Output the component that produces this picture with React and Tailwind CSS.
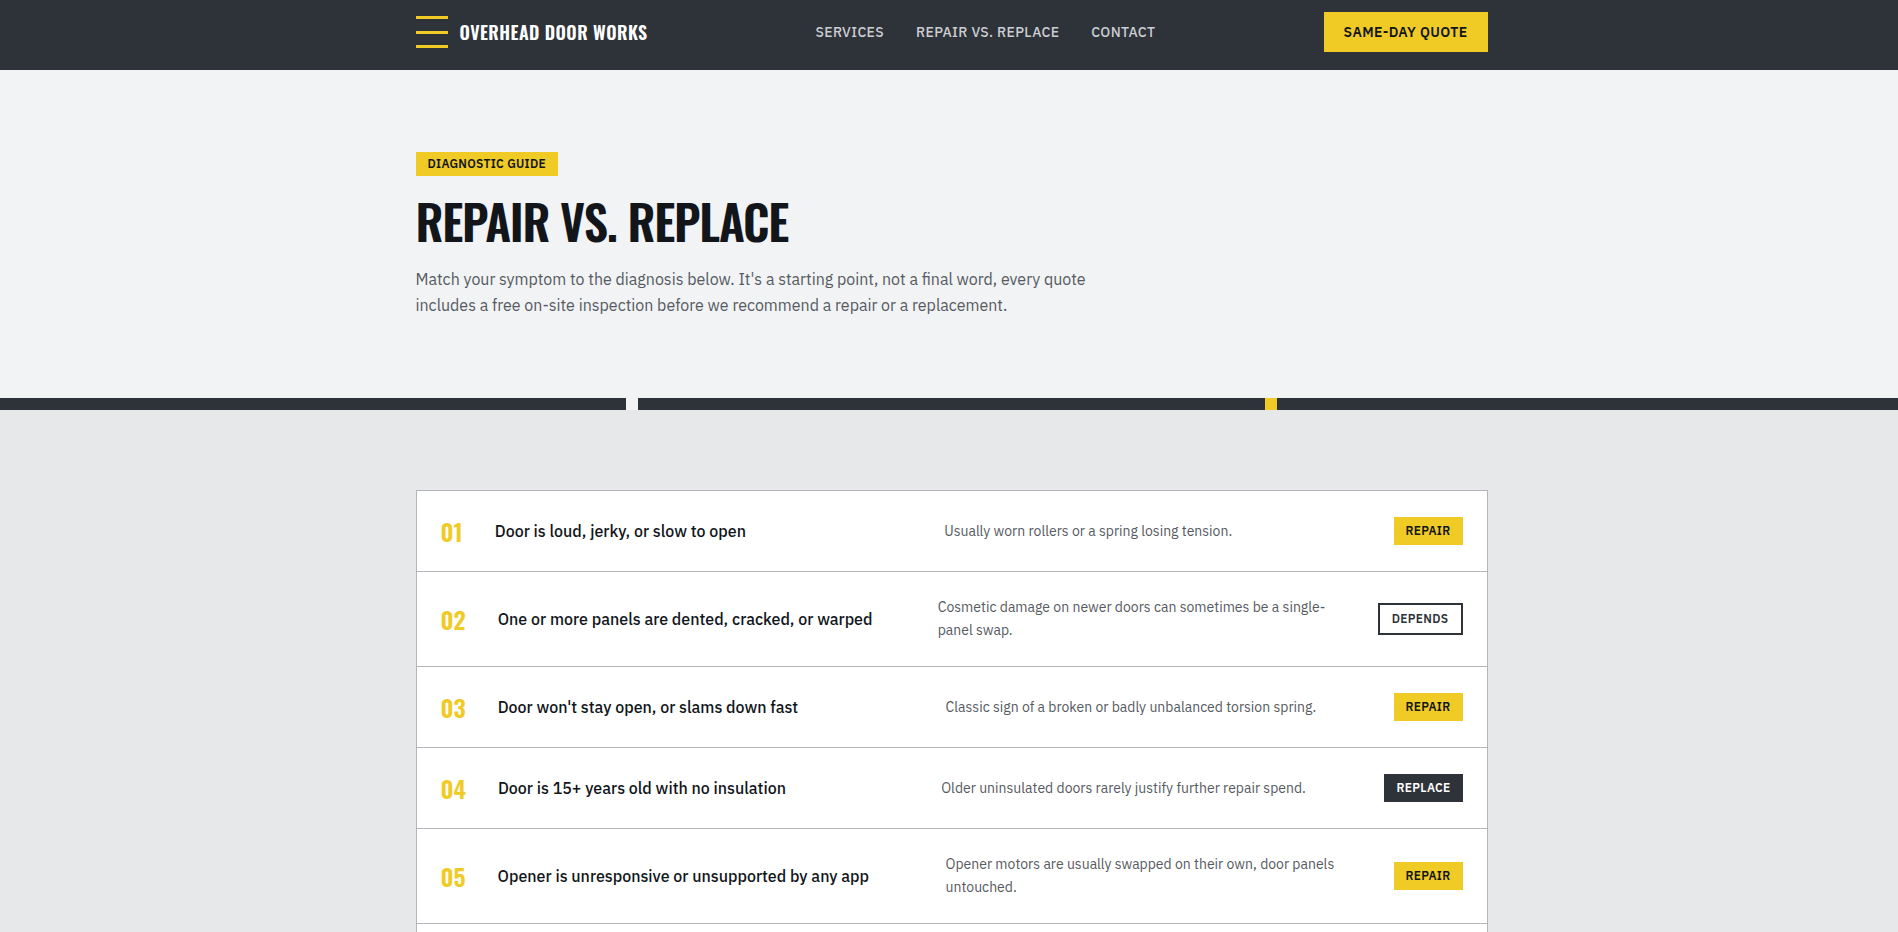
import React from 'react';

const navLinks = ['Services', 'Repair vs. Replace', 'Contact'];

const symptoms = [
  { symptom: 'Door is loud, jerky, or slow to open', diagnosis: 'Usually worn rollers or a spring losing tension.', verdict: 'Repair' },
  { symptom: 'One or more panels are dented, cracked, or warped', diagnosis: 'Cosmetic damage on newer doors can sometimes be a single-panel swap.', verdict: 'Depends' },
  { symptom: "Door won't stay open, or slams down fast", diagnosis: 'Classic sign of a broken or badly unbalanced torsion spring.', verdict: 'Repair' },
  { symptom: 'Door is 15+ years old with no insulation', diagnosis: 'Older uninsulated doors rarely justify further repair spend.', verdict: 'Replace' },
  { symptom: 'Opener is unresponsive or unsupported by any app', diagnosis: 'Opener motors are usually swapped on their own, door panels untouched.', verdict: 'Repair' },
];

const verdictStyles = {
  Repair: 'bg-[#f0cb26] text-[#12161b]',
  Depends: 'border-2 border-[#2e3239] bg-white text-[#2e3239]',
  Replace: 'bg-[#2e3239] text-white',
};

function Header() {
  return (
    <header className="bg-[#2e3239] pt-3 pb-[18px]">
      <div className="max-w-[1120px] mx-auto px-6 flex items-center justify-between">
        <a href="#" className="flex items-center gap-3 font-['Oswald',sans-serif] font-semibold text-lg tracking-wide uppercase text-white">
          <svg width="32" height="32" viewBox="0 0 32 32" fill="#f0cb26" aria-hidden="true">
            <rect y="0" width="32" height="3" />
            <rect y="15" width="32" height="3" />
            <rect y="29" width="32" height="3" />
          </svg>
          Overhead Door Works
        </a>
        <nav className="flex gap-8">
          {navLinks.map((label) => (
            <a key={label} href="#" className="text-sm font-medium tracking-wide uppercase text-[#cbcdd1]">{label}</a>
          ))}
        </nav>
        <button className="h-10 px-5 bg-[#f0cb26] text-sm font-semibold tracking-wide uppercase text-[#12161b]">Same-day quote</button>
      </div>
    </header>
  );
}

function Hero() {
  return (
    <section className="bg-[#f1f3f5]">
      <div className="max-w-[1120px] mx-auto px-6 pt-[82px] pb-20">
        <span className="block w-fit px-3 bg-[#f0cb26] text-xs leading-6 font-semibold tracking-wide uppercase text-[#12161b]">Diagnostic guide</span>
        <h1 className="mt-[19px] font-['Oswald',sans-serif] font-semibold text-5xl leading-[52px] tracking-tight uppercase text-[#12161b]">Repair vs. Replace</h1>
        <p className="mt-[19px] max-w-[680px] text-base leading-[26px] text-[#565a61]">
          Match your symptom to the diagnosis below. It's a starting point, not a final word, every quote includes a free on-site inspection before we recommend a repair or a replacement.
        </p>
      </div>
    </section>
  );
}

function PanelSeam() {
  return (
    <div className="flex h-3">
      <div className="flex-1 bg-[#2e3239]" />
      <div className="w-3 bg-[#f1f3f5]" />
      <div className="flex-1 bg-[#2e3239]" />
      <div className="w-3 bg-[#f0cb26]" />
      <div className="flex-1 bg-[#2e3239]" />
    </div>
  );
}

function Symptoms() {
  return (
    <section className="flex-1 flex flex-col pt-20">
      <div className="w-full max-w-[1120px] mx-auto px-6 flex-1 flex flex-col">
        <ol className="flex-1 bg-white border border-b-0 border-[#b3b5ba]">
          {symptoms.map((item, i) => (
            <li key={item.symptom} className="flex items-center gap-8 p-6 border-b border-[#b3b5ba]">
              <span className="font-['Oswald',sans-serif] font-semibold text-2xl leading-8 text-[#f0cb26]">0{i + 1}</span>
              <h2 className="flex-1 text-base leading-6 font-medium text-[#12161b]">{item.symptom}</h2>
              <p className="flex-1 text-sm leading-[23px] text-[#565a61]">{item.diagnosis}</p>
              <span className={`px-3 py-1 text-xs leading-5 font-semibold tracking-wide uppercase ${verdictStyles[item.verdict]}`}>{item.verdict}</span>
            </li>
          ))}
        </ol>
      </div>
    </section>
  );
}

export default function App() {
  return (
    <div className="h-screen overflow-hidden bg-[#e7e8ea] font-['IBM_Plex_Sans',sans-serif]">
      <div className="w-[calc(100%+5px)] h-full flex flex-col">
        <Header />
        <Hero />
        <PanelSeam />
        <Symptoms />
      </div>
    </div>
  );
}
